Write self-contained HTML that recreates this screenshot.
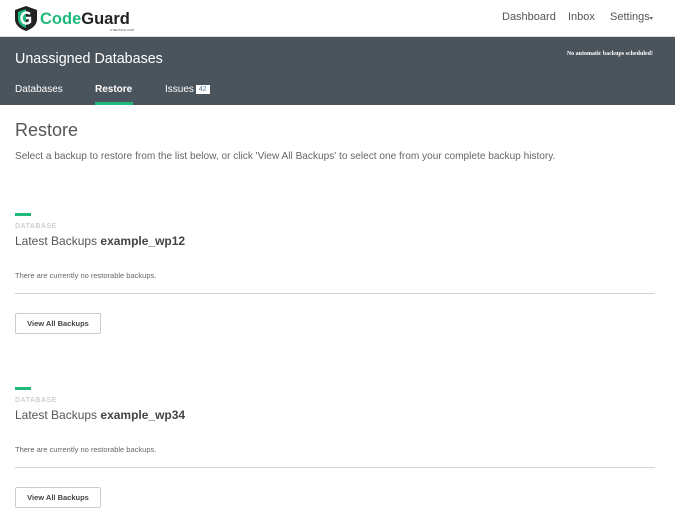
<!DOCTYPE html>
<html><head><meta charset="utf-8"><style>
*{margin:0;padding:0;box-sizing:border-box}
body{width:675px;height:518px;overflow:hidden;background:#fff;font-family:"Liberation Sans",sans-serif;color:#555}
.top{height:37px;position:relative;border-bottom:1px solid #ddd}
.logo{position:absolute;left:14px;top:6px}
.nav{position:absolute;top:11px;font-size:11px;color:#555}
.hdr{background:#4a545c;height:68px;position:relative;color:#fff}
.hdr h1{position:absolute;left:15px;top:14px;font-weight:normal;font-size:14.3px}
.hdr .note{position:absolute;right:22px;top:14px;font-size:6px;font-weight:bold;font-family:"Liberation Serif",serif}
.tab{position:absolute;top:47px;font-size:10px}
.bar{position:absolute;left:95px;top:65px;width:38px;height:3px;background:#1fba7b}
.badge{display:inline-block;background:#fff;color:#5a7a99;font-size:7px;padding:1px 3px;margin-left:2px;vertical-align:1px}
h2{position:absolute;left:15px;top:120px;font-weight:normal;font-size:18px;color:#555}
.p{position:absolute;left:15px;top:151px;font-size:10.1px;color:#666}
.sec{position:absolute;left:15px;width:640px}
.g{width:16px;height:3px;background:#1fba7b}
.lab{font-size:7px;font-weight:bold;color:#ccd0d4;letter-spacing:.5px;margin-top:7px}
.t{font-size:12px;color:#555;margin-top:4px}
.t b{color:#444}
.e{font-size:7.5px;color:#666;margin-top:23px}
.hr{border-top:1px solid #cfd4d8;margin-top:13px}
.btn{margin-top:19px;width:86px;height:21px;border:1px solid #ccc;border-radius:2px;font-size:7.5px;color:#444;text-align:center;line-height:19px;font-weight:bold}
</style></head><body>
<div class="top">
<svg class="logo" width="120" height="26" viewBox="0 0 120 26">
<path d="M1 4 L12 0 L23 4 L23 13 Q23 21 12 25 Q1 21 1 13Z" fill="#222"/>
<path d="M4 6 L12 3 L20 6 L20 13 Q20 19 12 22 Q4 19 4 13Z" fill="#1fba7b"/>
<path d="M12 3 L20 6 L20 13 Q20 19 12 22Z" fill="#222"/>
<path d="M16 8 Q12 5 9 8 Q6 12 9 16 Q12 19 16 16 L16 12 L12 12" stroke="#fff" stroke-width="2.4" fill="none"/>
<text x="26" y="18" font-family="Liberation Sans" font-weight="bold" font-size="16.5" fill="#1fba7b">Code<tspan fill="#222">Guard</tspan></text>
<text x="96" y="25" font-size="3" fill="#444" font-family="Liberation Sans">A SECTIGO COMPANY</text>
</svg>
<span class="nav" style="left:502px">Dashboard</span>
<span class="nav" style="left:568px">Inbox</span>
<span class="nav" style="left:610px">Settings<span style="font-size:6px">▾</span></span>
</div>
<div class="hdr">
<h1>Unassigned Databases</h1>
<div class="note">No automatic backups scheduled!</div>
<span class="tab" style="left:15px">Databases</span>
<span class="tab" style="left:95px;font-weight:bold">Restore</span>
<span class="tab" style="left:165px">Issues<span class="badge">42</span></span>
<div class="bar"></div>
</div>
<h2>Restore</h2>
<div class="p">Select a backup to restore from the list below, or click 'View All Backups' to select one from your complete backup history.</div>
<div class="sec" style="top:213px">
<div class="g"></div><div class="lab">DATABASE</div>
<div class="t">Latest Backups <b>example_wp12</b></div>
<div class="e">There are currently no restorable backups.</div>
<div class="hr"></div><div class="btn">View All Backups</div>
</div>
<div class="sec" style="top:387px">
<div class="g"></div><div class="lab">DATABASE</div>
<div class="t">Latest Backups <b>example_wp34</b></div>
<div class="e">There are currently no restorable backups.</div>
<div class="hr"></div><div class="btn">View All Backups</div>
</div>
</body></html>
